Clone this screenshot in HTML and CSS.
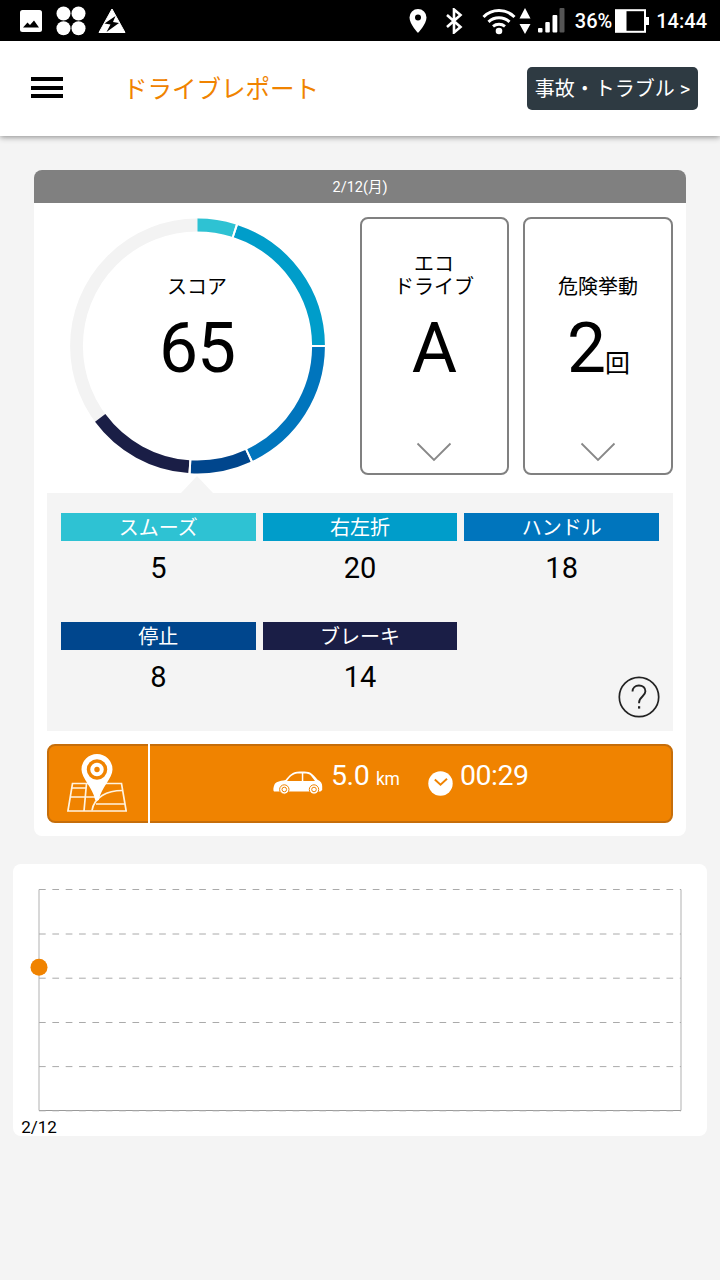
FILE: index.html
```html
<!DOCTYPE html>
<html lang="ja">
<head>
    <meta charset="UTF-8">
    <meta name="viewport" content="width=device-width, initial-scale=1.0">
    <title>ドライブレポート</title>
    <link rel="stylesheet" href="styles.css">
</head>
<body>
    <div class="status-bar">
        <div class="status-left">
            <svg width="22" height="22" viewBox="0 0 22 22">
                <rect width="22" height="22" rx="2.5" fill="#fff"/>
                <path d="M3 17.5l4.5-5 2.5 2.500 4-4.500 5 7z" fill="#000"/>
            </svg>
            <svg width="30" height="30" viewBox="0 0 30 30" fill="#fff">
                <circle cx="7.500" cy="7.500" r="7"/>
                <circle cx="22.500" cy="7.500" r="7"/>
                <circle cx="7.500" cy="22.200" r="7"/>
                <circle cx="22.500" cy="22.200" r="7"/>
            </svg>
            <svg width="28" height="26" viewBox="0 0 28 26">
                <path d="M14 1L27 24.500H1z" fill="#fff" stroke="#fff" stroke-linejoin="round"/>
                <path d="M17.500 8L6.500 15.500l6 1-4 7.500L21 15l-6-1z" fill="#000"/>
            </svg>
        </div>
        <div class="status-right">
            <svg class="icon-pin" width="18" height="24" viewBox="0 0 18 24">
                <path d="M9 0a8.500 8.500 0 0 0-8.500 8.500C.5 15 9 24 9 24s8.500-9 8.500-15.500A8.500 8.500 0 0 0 9 0zm0 11.500a3 3 0 1 1 0-6 3 3 0 0 1 0 6z" fill="#fff"/>
            </svg>
            <svg class="icon-bluetooth" width="18" height="26" viewBox="0 0 18 26">
                <path d="M2 7l13.500 12L9 24.500V1.500L15.500 7 2 19" fill="none" stroke="#fff" stroke-width="2.600"/>
            </svg>
            <svg class="icon-wifi" width="34" height="28" viewBox="0 0 34 28">
                <g fill="none" stroke="#fff" stroke-width="3">
                    <path d="M1.500 10a22 22 0 0 1 31 0"/>
                    <path d="M6.500 14.800a15.500 15.500 0 0 1 21 0"/>
                    <path d="M11 19.300a9.500 9.500 0 0 1 12 0"/>
                </g>
                <circle cx="17" cy="24" r="3.300" fill="#fff"/>
            </svg>
            <svg class="icon-arrows" width="12" height="26" viewBox="0 0 12 26" fill="#fff">
                <path d="M6 0l5.500 10.500H.5zM6 26L.5 16h11z"/>
            </svg>
            <svg class="icon-signal" width="27" height="25" viewBox="0 0 27 25" fill="#fff">
                <rect x="0" y="20" width="4.500" height="4.500" rx="1"/>
                <rect x="7.300" y="14" width="4.500" height="10.500" rx="1"/>
                <rect x="14.500" y="7" width="4.800" height="17.500" rx="1"/>
                <rect x="21.500" y="0" width="5" height="24.500" rx="1" fill="#555"/>
            </svg>
            <span class="battery-level">36%</span>
            <svg class="icon-battery" width="35" height="24" viewBox="0 0 35 24">
                <rect x="1" y="1.200" width="29" height="21.600" fill="none" stroke="#fff" stroke-width="2"/>
                <rect x="1" y="1" width="10.500" height="22" fill="#fff"/>
                <rect x="30" y="8" width="4" height="8" fill="#fff"/>
            </svg>
            <span class="clock">14:44</span>
        </div>
    </div>

    <header class="header">
        <button class="menu-btn" aria-label="メニュー">
            <span></span>
            <span></span>
            <span></span>
        </button>
        <h1>ドライブレポート</h1>
        <a href="#" class="trouble-btn">事故・トラブル &gt;</a>
    </header>

    <main>
        <section class="report">
            <h2 class="report-date">2/12(月)</h2>
            <div class="report-body">
                <div class="summary">
                    <div class="score">
                        <!-- pathLength = 100 : 1点 = 1% -->
                        <svg class="score-ring" width="256" height="256" viewBox="-.5 0 256 256">
                            <g fill="none" stroke-width="12.800" transform="rotate(-90 128 128)">
                                <circle cx="128" cy="128" r="121" stroke="#f3f3f3"/>
                                <circle cx="128" cy="128" r="121" pathLength="100" stroke="#2ec2d3" stroke-dasharray="4.870 95.130"/>
                                <circle cx="128" cy="128" r="121" pathLength="100" stroke="#009dca" stroke-dasharray="19.740 80.260" stroke-dashoffset="-5.130"/>
                                <circle cx="128" cy="128" r="121" pathLength="100" stroke="#0075bd" stroke-dasharray="17.740 82.260" stroke-dashoffset="-25.130"/>
                                <circle cx="128" cy="128" r="121" pathLength="100" stroke="#00468d" stroke-dasharray="7.740 92.260" stroke-dashoffset="-43.130"/>
                                <circle cx="128" cy="128" r="121" pathLength="100" stroke="#1a1e46" stroke-dasharray="13.740 86.260" stroke-dashoffset="-51.130"/>
                                <g stroke="#fff" stroke-width="14">
                                    <circle cx="128" cy="128" r="121" pathLength="100" stroke-dasharray=".26 99.740" stroke-dashoffset="-4.870"/>
                                    <circle cx="128" cy="128" r="121" pathLength="100" stroke-dasharray=".26 99.740" stroke-dashoffset="-24.870"/>
                                    <circle cx="128" cy="128" r="121" pathLength="100" stroke-dasharray=".26 99.740" stroke-dashoffset="-42.870"/>
                                    <circle cx="128" cy="128" r="121" pathLength="100" stroke-dasharray=".26 99.740" stroke-dashoffset="-50.870"/>
                                </g>
                            </g>
                        </svg>
                        <div class="score-text">
                            <p class="label">スコア</p>
                            <p class="value">65</p>
                        </div>
                    </div>
                    <div class="tile">
                        <p class="label">エコ<br>ドライブ</p>
                        <p class="value">A</p>
                        <svg class="chevron" width="36" height="20" viewBox="0 0 36 20">
                            <path d="M1.500 1.500L18 18 34.500 1.500" fill="none" stroke="#888" stroke-width="1.800"/>
                        </svg>
                    </div>
                    <div class="tile">
                        <p class="label">危険挙動</p>
                        <p class="value">2<small>回</small></p>
                        <svg class="chevron" width="36" height="20" viewBox="0 0 36 20">
                            <path d="M1.500 1.500L18 18 34.500 1.500" fill="none" stroke="#888" stroke-width="1.800"/>
                        </svg>
                    </div>
                </div>

                <div class="details">
                    <dl class="detail-grid">
                        <div><dt class="smooth">スムーズ</dt><dd>5</dd></div>
                        <div><dt class="turn">右左折</dt><dd>20</dd></div>
                        <div><dt class="handle">ハンドル</dt><dd>18</dd></div>
                        <div><dt class="stop">停止</dt><dd>8</dd></div>
                        <div><dt class="brake">ブレーキ</dt><dd>14</dd></div>
                    </dl>
                    <button class="help-btn" aria-label="ヘルプ">
                        <svg width="42" height="42" viewBox="0 0 42 42" fill="none" stroke="#222">
                            <circle cx="21" cy="21" r="19.700" stroke-width="1.700"/>
                            <path d="M14.500 15.500c.1-3.500 2.700-6 6.400-6 3.800 0 6.500 2.300 6.500 5.700 0 5.300-6.300 5.300-6.300 11.300v.8" stroke-width="1.900"/>
                            <path d="M21.100 30.200v2.400" stroke-width="2.200"/>
                        </svg>
                    </button>
                </div>

                <div class="trip">
                    <a href="#" class="trip-map" aria-label="地図">
                        <svg width="60" height="60" viewBox="0 0 60 60">
                            <g fill="none" stroke="#fff3df" stroke-width="1.700">
                                <path d="M5.500 30.500h49l4.700 27.500H.9z"/>
                                <path d="M5 35h14M3 44h25M19.500 30.500L17 58M25 57.500C27 44 40 37.500 55.500 37.500M29 51h29"/>
                            </g>
                            <path d="M30 1a15.500 15.500 0 0 0-15.500 15.500C14.500 25 26 35 28 46.500c.5 1.500 3.500 1.500 4 0C34 35 45.500 25 45.500 16.500A15.500 15.500 0 0 0 30 1z" fill="#fff"/>
                            <circle cx="30" cy="16.500" r="8.500" fill="none" stroke="#f08300" stroke-width="3.500"/>
                            <circle cx="30" cy="16.500" r="2.700" fill="#f08300"/>
                        </svg>
                    </a>
                    <div class="trip-info">
                        <svg class="icon-car" width="50" height="24" viewBox="0 0 50 24">
                            <path d="M1 20.500c-1-1-.8-4 .5-7 .8-2.200 5-3.500 11-4.500C16.500 4 19.500 1 24 .7c5-.5 10-.3 13 .8 2.800 1.500 5.500 4.500 7.500 7.300 3.500 1.500 4.700 3.500 4.700 6.500v3.700l-1.700 1.500z" fill="#fff"/>
                            <path d="M14 10c3-4.200 6-7.200 10.500-7.500h4.300V10zM30.300 2.500c4.500 0 6 .5 7.500 2.100l4.200 5.400H30.300z" fill="#f08300"/>
                            <g fill="#fff" stroke="#f08300">
                                <circle cx="11.300" cy="18.500" r="4.700"/>
                                <circle cx="41" cy="18.500" r="4.700"/>
                                <circle cx="11.300" cy="18.500" r="2.300"/>
                                <circle cx="41" cy="18.500" r="2.300"/>
                            </g>
                        </svg>
                        <span class="distance">5.0 <small>km</small></span>
                        <svg class="icon-clock" width="25" height="25" viewBox="0 0 25 25">
                            <circle cx="12.500" cy="12.500" r="12.200" fill="#fff"/>
                            <path d="M6.800 8.500l5.700 5.300 6.500-6" fill="none" stroke="#f08300" stroke-width="1.900"/>
                        </svg>
                        <span class="duration">00:29</span>
                    </div>
                </div>
            </div>
        </section>

        <section class="chart">
            <svg width="694" height="272" viewBox="0 0 694 272">
                <path d="M26 25.500V246.500M668 25.500V246.500" stroke="#ccc" stroke-width="1.500"/>
                <path d="M26 246.500H668" stroke="#999"/>
                <g stroke="#aaa" stroke-dasharray="6.700 6.650">
                    <path d="M26 25.500H668"/>
                    <path d="M26 70H668"/>
                    <path d="M26 114.200H668"/>
                    <path d="M26 158.500H668"/>
                    <path d="M26 202.600H668"/>
                    <path d="M26 246.800H668"/>
                </g>
                <circle cx="26" cy="103.300" r="8.500" fill="#f08300"/>
                <text x="26" y="269" text-anchor="middle">2/12</text>
            </svg>
        </section>
    </main>
</body>
</html>
```
FILE: styles.css
```css
* {
    box-sizing: border-box;
}
body {
    margin: 0;
    min-height: 1280px;
    background-color: #f4f4f4;
    color: #000;
    font-family: Roboto, "Noto Sans CJK JP", sans-serif;
}
h1, h2, p, dl, dd {
    margin: 0;
    font-weight: normal;
}
svg {
    display: block;
    flex: none;
}
button {
    padding: 0;
    border: none;
    background: none;
}

/* ステータスバー */
.status-bar {
    display: flex;
    justify-content: space-between;
    height: 41px;
    padding: 0 13px 0 20px;
    background-color: #000;
    color: #fff;
    font-size: 20px;
    font-weight: 500;
    line-height: 42px;
}
.status-left, .status-right {
    display: flex;
    align-items: center;
}
.status-left {
    gap: 14px;
}
.status-left svg:last-child {
    margin-left: -2px;
}
.icon-bluetooth {
    margin-left: 18px;
}
.icon-wifi {
    margin-left: 19px;
}
.icon-arrows {
    margin-left: 3px;
}
.icon-signal {
    margin-left: 7px;
}
.battery-level {
    margin-left: 10px;
}
.icon-battery {
    margin-left: 3px;
}
.clock {
    margin-left: 6px;
}

/* ヘッダー */
.header {
    display: flex;
    align-items: center;
    height: 95px;
    padding: 0 22px 0 31px;
    background-color: #fff;
    box-shadow: 0 1px 6px rgba(0, 0, 0, 0.45);
}
.menu-btn {
    display: flex;
    flex-direction: column;
    gap: 5px;
    width: 32px;
    margin-bottom: 2px;
}
.menu-btn span {
    height: 4px;
    background-color: #000;
}
.menu-btn span:last-child {
    margin-top: -1px;
}
.header h1 {
    margin-left: 60px;
    padding-top: 2px;
    color: #f08300;
    font-size: 24.5px;
    line-height: 36px;
}
.trouble-btn {
    margin-left: auto;
    width: 171px;
    height: 43px;
    border-radius: 5px;
    background-color: #2e3a42;
    color: #fff;
    font-size: 20px;
    line-height: 45px;
    text-align: center;
    text-decoration: none;
    white-space: nowrap;
}

/* レポート */
.report {
    margin: 34px 34px 0;
    border-radius: 8px;
    background-color: #fff;
    overflow: hidden;
}
.report-date {
    height: 33px;
    background-color: #808080;
    color: #fff;
    font-size: 14.5px;
    line-height: 36px;
    text-align: center;
}
.report-body {
    padding: 14px 13px 13px;
}
.summary {
    display: grid;
    grid-template-columns: 300px 149px 150px;
    justify-content: space-between;
    height: 258px;
}
.summary .tile:nth-child(2) {
    margin: 0 1px 0 -1px;
}
.score {
    display: grid;
    justify-items: center;
}
.score-ring, .score-text {
    grid-area: 1 / 1;
}
.score-ring {
    margin-top: 1px;
}
.score-text {
    padding-top: 59px;
    text-align: center;
}
.label {
    font-size: 20px;
    line-height: 23px;
}
.value {
    margin-top: 9px;
    font-size: 69.5px;
    line-height: 82px;
    letter-spacing: -1px;
}
.value small {
    font-size: 25px;
}
.tile {
    display: flex;
    flex-direction: column;
    align-items: center;
    padding-bottom: 11px;
    border: 2px solid #808080;
    border-radius: 8px;
    text-align: center;
}
.tile .label {
    display: flex;
    align-items: flex-end;
    height: 80px;
}
.chevron {
    margin-top: auto;
}

/* 項目別スコア */
.details {
    position: relative;
    height: 238px;
    margin-top: 18px;
    padding: 20px 14px 0;
    background-color: #f4f4f4;
}
.details::before {
    content: "";
    position: absolute;
    top: -17px;
    left: 134px;
    border: 16px solid transparent;
    border-top: none;
    border-bottom: 17px solid #f4f4f4;
}
.detail-grid {
    display: grid;
    grid-template-columns: repeat(3, 1fr);
    gap: 0 7px;
    grid-auto-rows: 109px;
    text-align: center;
}
.detail-grid dt {
    height: 28px;
    color: #fff;
    font-size: 20px;
    line-height: 30px;
}
.detail-grid dd {
    font-size: 29px;
    line-height: 54px;
}
.smooth {
    background-color: #2ec2d3;
}
.turn {
    background-color: #009dca;
}
.handle {
    background-color: #0075bd;
}
.stop {
    background-color: #00468d;
}
.brake {
    background-color: #1a1e46;
}
.help-btn {
    position: absolute;
    right: 13px;
    bottom: 13px;
}

/* 走行情報 */
.trip {
    display: flex;
    height: 79px;
    margin-top: 13px;
    border: 2px solid #c66e0a;
    border-radius: 8px;
    background-color: #f08300;
    color: #fff;
}
.trip-map {
    display: flex;
    align-items: center;
    justify-content: center;
    width: 101px;
    margin: -2px 0;
    padding: 0 3px 2px 0;
    border-right: 2px solid #fff;
}
.trip-info {
    display: flex;
    flex: 1;
    padding: 13px 0 0 123px;
    font-size: 28.5px;
    line-height: 34px;
    white-space: nowrap;
}
.icon-car {
    margin-top: 12px;
}
.distance {
    width: 69px;
    margin-left: 8px;
    letter-spacing: -0.4px;
}
.distance small {
    font-size: 17.5px;
}
.icon-clock {
    margin: 12px 7px 0 28px;
}
.duration {
    letter-spacing: -0.5px;
}

/* グラフ */
.chart {
    margin: 28px 13px 0;
    border-radius: 8px;
    background-color: #fff;
}
.chart text {
    font-size: 17px;
}
```
